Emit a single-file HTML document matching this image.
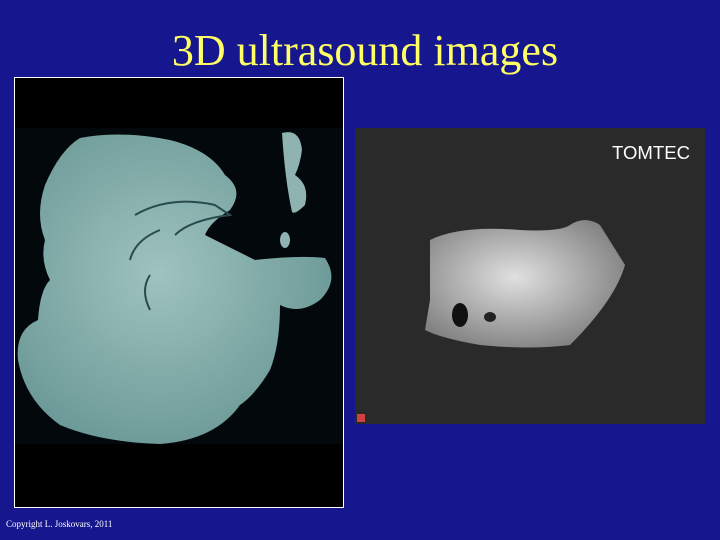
<!DOCTYPE html>
<html><head><style>
body{margin:0;width:720px;height:540px;background:#16168e;position:relative;overflow:hidden;font-family:"Liberation Serif",serif}
.t{position:absolute;left:0;width:720px;top:24px;text-align:center;color:#ffff66;font-size:44px;line-height:54px;padding-left:10px;box-sizing:border-box}
.c{position:absolute;left:6px;top:519px;color:#fff;font-size:9px}
</style></head><body>
<div class="t">3D ultrasound images</div>
<svg style="position:absolute;left:0;top:0" width="720" height="540">
<defs>
<radialGradient id="g1" cx="0.45" cy="0.45" r="0.6"><stop offset="0" stop-color="#9fc3be"/><stop offset="1" stop-color="#6a9896"/></radialGradient>
<radialGradient id="g2" cx="0.45" cy="0.45" r="0.6"><stop offset="0" stop-color="#e0e0e0"/><stop offset="1" stop-color="#808080"/></radialGradient>
</defs>
<rect x="14.5" y="77.5" width="329" height="430" fill="#000" stroke="#fff"/>
<rect x="15" y="128" width="328" height="316" fill="#02080c"/>
<path d="M80 138 Q120 130 170 140 Q210 150 225 175 Q245 190 230 210 Q210 222 205 235 L255 260 Q300 255 325 258 Q340 280 320 300 Q300 315 280 305 Q280 345 270 370 Q255 395 240 405 Q215 440 160 444 Q100 442 60 425 Q25 400 18 360 Q15 330 38 320 Q40 290 50 280 Q40 260 45 240 Q35 215 45 185 Q60 150 80 138Z" fill="url(#g1)"/>
<path d="M282 133 Q300 128 302 150 Q300 165 295 175 Q310 185 305 205 Q295 215 292 212 Q285 180 282 133Z" fill="#8fb3b0"/>
<ellipse cx="285" cy="240" rx="5" ry="8" fill="#8fb3b0"/>
<path d="M135 215 Q170 195 215 205 L230 215 Q190 220 175 235" stroke="#2a4a4c" stroke-width="2" fill="none"/>
<path d="M130 260 Q135 240 160 230 M150 310 Q140 290 150 275" stroke="#2a4a4c" stroke-width="2" fill="none"/>
<rect x="355" y="128" width="350" height="296" fill="#2a2a2a"/>
<path d="M430 240 Q460 225 520 230 Q560 232 570 225 Q585 215 600 225 L625 265 Q615 300 570 345 Q530 350 480 345 Q440 338 425 330 L430 300Z" fill="url(#g2)"/>
<ellipse cx="460" cy="315" rx="8" ry="12" fill="#111"/>
<ellipse cx="490" cy="317" rx="6" ry="5" fill="#222"/>
<text x="612" y="159" fill="#fff" font-family="Liberation Sans,sans-serif" font-size="18" textLength="78" lengthAdjust="spacingAndGlyphs">TOMTEC</text>
<rect x="357" y="414" width="8" height="8" fill="#d04040"/>
</svg>
<div class="c">Copyright L. Joskovars, 2011</div>
</body></html>
